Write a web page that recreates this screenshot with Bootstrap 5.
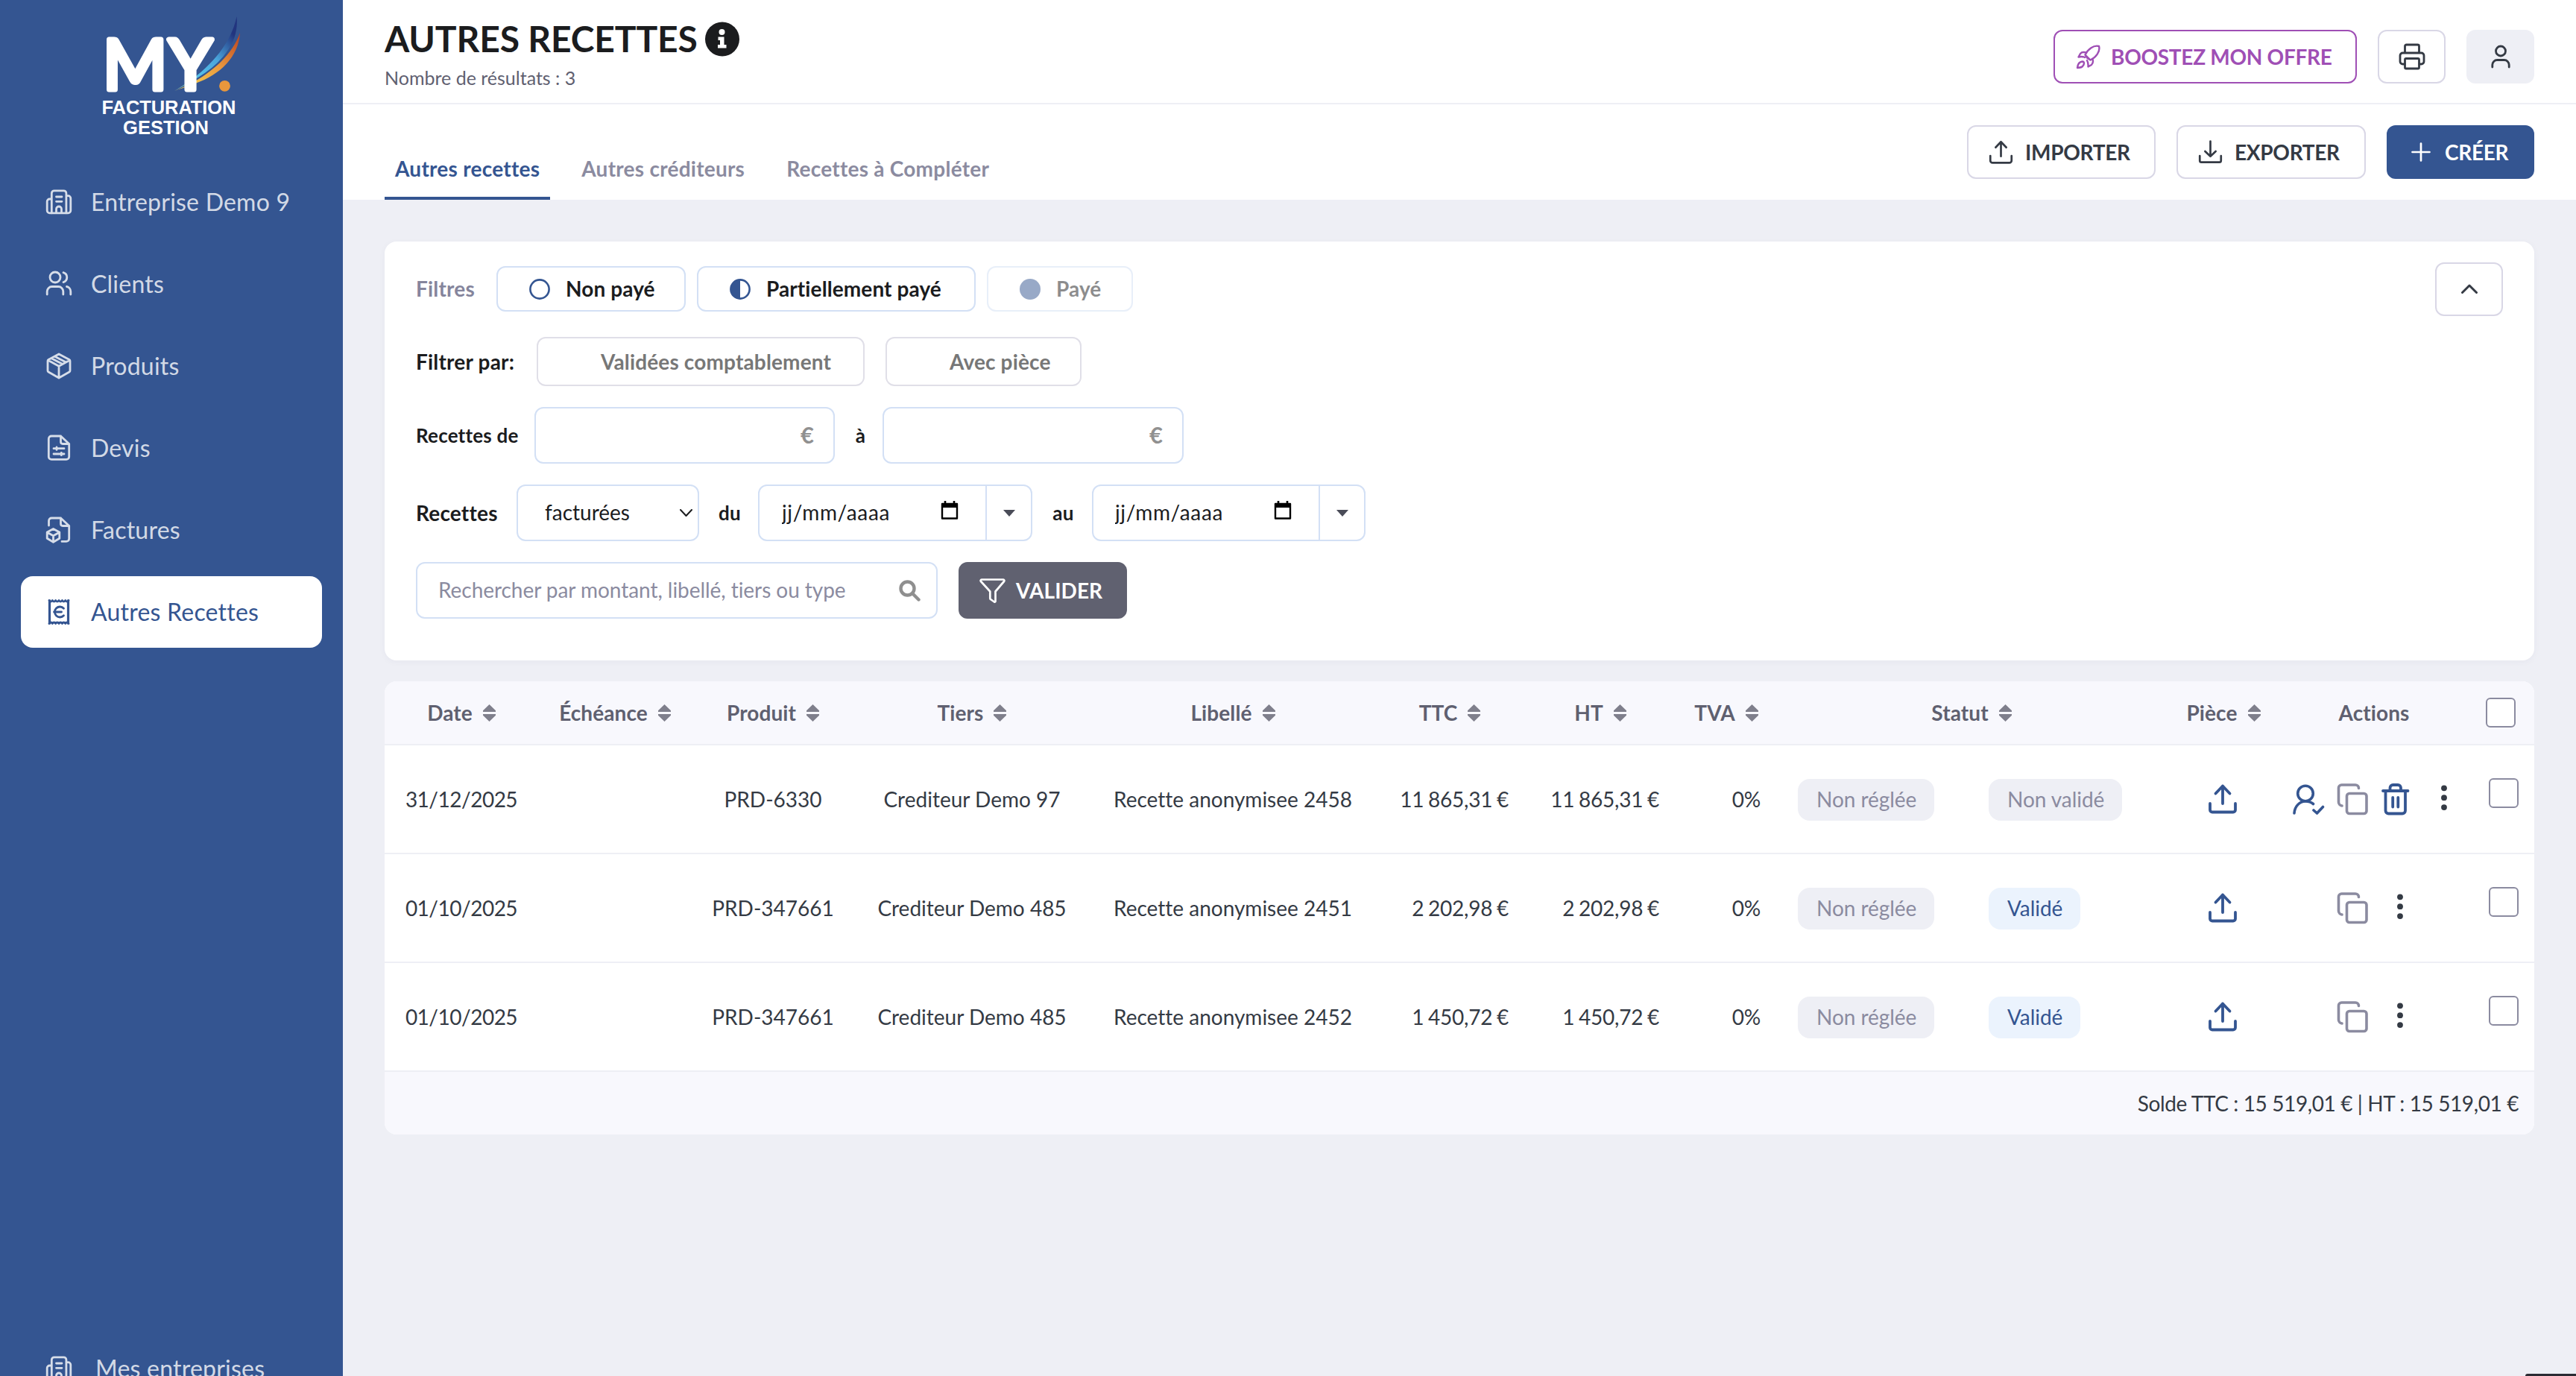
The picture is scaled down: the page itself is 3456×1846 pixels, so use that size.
<!DOCTYPE html>
<html lang="fr">
<head>
<meta charset="utf-8">
<title>Autres recettes</title>
<link rel="stylesheet" href="https://cdn.jsdelivr.net/npm/bootstrap@5.3.0/dist/css/bootstrap.min.css">
<style>
:root{--blue:#345591;--ink:#343a44;--grey:#8b8ba0;--line:#eeeff5;--edge:#d9d7e6;--soft:#d3e0f5}
body{font-family:Lato,"Noto Sans",sans-serif;font-size:28px;line-height:1.2;font-variant-ligatures:none;background:#eeeff5;color:var(--ink);height:1846px;overflow:hidden}
svg{display:block;flex:none;fill:none;stroke-linecap:round;stroke-linejoin:round}
.side{width:460px;height:1846px;background:var(--blue);overflow:hidden}
.brand{height:223px}
.side-link{height:96px;margin:0 28px 14px;padding:0 32px;border-radius:16px;font-size:32px;letter-spacing:.22px;color:rgba(255,255,255,.8);text-decoration:none;display:flex;align-items:center;flex:none}
.side-link svg{width:36px;height:36px;margin-right:25px;margin-left:1px;stroke:currentColor;stroke-width:2.8}
.side-link.on{background:#fff;color:var(--blue)}
.side-end{margin-top:905px}
.side-end svg{margin-right:31px}
.top{height:140px;padding:28px 56px 0;border-bottom:2px solid var(--line);background:#fff}
.top h1{font-size:48px;line-height:48px;font-weight:700;color:#1b1c1e;letter-spacing:-.15px;margin:0 0 13px}
.top .count{font-size:25px;line-height:30px;color:#606070}
.tools{gap:28px;padding-top:12px}
.bt{height:72px;border:2px solid var(--edge);border-radius:12px;background:#fff;color:var(--ink);font-size:28px;font-weight:700;line-height:1;letter-spacing:-.3px;display:flex;align-items:center;padding:0}
.bt svg{stroke:currentColor}
.bt-sq{width:91px;justify-content:center}
.bt-boost{width:407px;border-color:#9f4fb5;color:#9f4fb5;padding-left:28px}
.sub{height:128px;padding:0 56px;background:#fff}
.tabs{gap:28px}
.tabs .tab-item{height:128px;padding:60px 14px 0;line-height:52px;border-bottom:4px solid transparent;font-weight:700;letter-spacing:.25px;color:var(--grey);text-decoration:none}
.tabs .tab-item.on{color:var(--blue);border-color:var(--blue)}
.acts{gap:28px;padding-top:28px}
.panel{margin:56px 56px 28px;height:562px;border-radius:16px;background:#fff;padding:33px 42px 0;box-shadow:0 2px 10px rgba(60,60,110,.04)}
.lbl{font-weight:700;color:#1b1c1e;white-space:nowrap;letter-spacing:.2px;padding-top:1px}
.chip{height:61px;border:2px solid var(--soft);border-radius:12px;font-weight:700;color:#1b1c1e;display:flex;align-items:center;padding-left:42px;margin-right:15px;letter-spacing:.1px}
.chip svg{margin-right:21px}
.tog{height:66px;border:2px solid #e0dfe8;border-radius:12px;font-weight:700;color:#777;display:flex;align-items:center;letter-spacing:.15px;padding-top:1px}
.fld{height:76px;border:2px solid var(--soft);border-radius:12px;background:#fff;display:flex;align-items:center;color:#1b1c1e}
.fld input{border:0;outline:0;background:none;width:100%;padding:0;color:inherit;min-width:0}
.fld input::placeholder{color:var(--grey);opacity:1;letter-spacing:-.05px}
.fld .dt::placeholder{color:#1b1c1e;letter-spacing:.65px}
.dd{width:61px;height:72px;border-left:2px solid var(--soft);display:flex;align-items:center;justify-content:center}
.list{margin:0 56px;border-radius:16px;overflow:hidden;background:#fff}
.list table{width:2884px;table-layout:fixed;border-collapse:separate;border-spacing:0;margin:0}
.list th{height:86px;padding:2px 0 0;background:#f8f8fd;border-bottom:2px solid var(--line);color:#5f6070;font-weight:700;text-align:center;vertical-align:middle;letter-spacing:.1px}
.list th svg{display:inline-block;vertical-align:-1px;margin-left:14px;fill:#7f7f8c}
.list td{height:146px;padding:1px 0 0;border-bottom:2px solid var(--line);text-align:center;vertical-align:middle;white-space:nowrap}
.list td.num{text-align:right;letter-spacing:-.2px;word-spacing:-1.3px;padding-right:20px}
.list td.num.n2{padding-right:24px}
.list td svg{position:relative;top:-1px;left:-1px}
.date{letter-spacing:-.5px}
.state{height:56px;border-radius:16px;background:#eeeff5;color:var(--grey);display:inline-flex;align-items:center;padding:1px 24px 0 25px;font-size:28px;letter-spacing:-.05px}
.state.ok{background:#ebf3fd;color:var(--blue)}
.slot{width:256px;text-align:left}
.box{display:block;width:40px;height:40px;border:2px solid var(--grey);border-radius:6px!important;margin:0!important;float:none!important}
.list td.pick{vertical-align:top;padding:44px 0 0 27px}
.list th.pick{padding:0 0 0 23px}
.foot{height:84px;background:#f8f8fd;padding:2px 21px 0 0;letter-spacing:-.39px;display:flex;align-items:center;justify-content:flex-end}
.strip{position:fixed;right:0;bottom:0;width:68px;height:3px;background:#2b2b33;border-top-left-radius:3px}
</style>
<script src="https://cdn.jsdelivr.net/npm/bootstrap@5.3.0/dist/js/bootstrap.bundle.min.js"></script>
</head>
<body>
<svg width="0" height="0" class="position-absolute">
  <defs>
    <symbol id="i-build" viewBox="0 0 36 36"><path d="M8.3 33V6.200a3.400 3.400 0 0 1 3.400-3.400h12.800a3.400 3.400 0 0 1 3.400 3.400V33M8.300 14H5.500a3.300 3.300 0 0 0-3.300 3.300v12.200A3.300 3.300 0 0 0 5.500 32.800h25a3.300 3.300 0 0 0 3.300-3.300V13a3.300 3.300 0 0 0-3.300-3.300h-2.600M14.500 11h7.500M14.500 17.300h7.500M14.500 32.500v-5a3.500 3.500 0 0 1 7 0v5"/></symbol>
    <symbol id="i-sort" viewBox="0 0 17 23"><path stroke="none" d="M8.500 0L17 8.200v1.800H0V8.200zM8.500 23L17 14.800V13H0v1.800z"/></symbol>
    <symbol id="i-up" viewBox="0 0 44 44"><path d="M5 28v8.500a3 3 0 0 0 3 3h28a3 3 0 0 0 3-3V28M22 28V4.500M12.500 14.500L22 4.500l9.500 10"/></symbol>
    <symbol id="i-down" viewBox="0 0 44 44"><path d="M3 28v8.500a3 3 0 0 0 3 3h32a3 3 0 0 0 3-3V28M22 29V2M12.500 20L22 29l9.500-9"/></symbol>
    <symbol id="i-copy" viewBox="0 0 44 44"><path d="M8 31a5 5 0 0 1-4.500-5V7a4 4 0 0 1 4-4H26a4.500 4.500 0 0 1 4.500 4.500"/><rect x="14.500" y="14.500" width="26.500" height="27" rx="3.500"/></symbol>
    <symbol id="i-dots" viewBox="0 0 20 44"><g fill="#343a44" stroke="none"><circle cx="10" cy="7.300" r="3.900"/><circle cx="10" cy="20.200" r="3.900"/><circle cx="10" cy="33.100" r="3.900"/></g></symbol>
    <symbol id="i-cal" viewBox="0 0 24 26"><path d="M2 5h20v19.500H2z" stroke="#000" stroke-width="2.400" stroke-linejoin="round"/><path d="M1 4h22v6H1z" fill="#000"/><path d="M6 1v4M18 1v4" stroke="#000" stroke-width="2.600" stroke-linecap="butt"/></symbol>
    <symbol id="i-caret" viewBox="0 0 16 9"><path d="M0 0h16L8 9z" fill="#4a4c58" stroke="none"/></symbol>
  </defs>
</svg>
<div class="d-flex">
<aside class="side d-flex flex-column flex-shrink-0">
  <div class="brand flex-shrink-0">
    <svg width="460" height="200" viewBox="0 0 460 200">
      <defs>
        <linearGradient id="gb" x1="0" y1="1" x2="1" y2="0"><stop offset=".1" stop-color="#7fc0b0"/><stop offset=".3" stop-color="#55bfe8"/><stop offset=".55" stop-color="#4aa5dc"/><stop offset=".85" stop-color="#22357f"/></linearGradient>
        <linearGradient id="go" x1="0" y1="1" x2="1" y2="0"><stop offset=".2" stop-color="#f3c44b"/><stop offset=".55" stop-color="#e9993f"/><stop offset="1" stop-color="#b8401f"/></linearGradient>
      </defs>
      <path fill="url(#gb)" d="M234 122C272 100 309 65 317.500 22C321 52 303 84 262 107C250 113 242 118 234 122z"/>
      <path fill="none" stroke="#345591" stroke-width="2" d="M250 114C285 96 306 76 318 48"/>
      <path fill="url(#go)" d="M234 122C275 106 310 78 322 44C320 76 296 100 262 112C252 116 243 119 234 122z"/>
      <g fill="#fff" stroke="#fff" stroke-width="7" font-family="Lato" font-size="93">
        <text y="120"><tspan x="138">M</tspan><tspan x="226.500">Y</tspan></text>
      </g>
      <circle cx="301.500" cy="115.300" r="7.400" fill="#e8973c"/>
      <g fill="#fff" font-family="Liberation Sans" font-weight="700" font-size="25.500">
        <text x="136.500" y="153" textLength="180">FACTURATION</text><text x="165" y="180.300" textLength="115">GESTION</text>
      </g>
    </svg>
  </div>
  <a class="side-link"><svg><use href="#i-build"/></svg>Entreprise Demo 9</a>
  <a class="side-link"><svg viewBox="0 0 36 36"><circle cx="13" cy="9" r="7"/><path d="M2.200 32v-4A6.500 6.500 0 0 1 8.700 21.500h8.600a6.500 6.500 0 0 1 6.500 6.500v4M24 2.600a6.800 6.800 0 0 1 0 13M28.500 21.500a6.500 6.500 0 0 1 5.300 6.500v4"/></svg>Clients</a>
  <a class="side-link"><svg viewBox="0 0 36 36"><path d="M18 2L32 9.500a2 2 0 0 1 1 1.800v12.900a2 2 0 0 1-1 1.800L18 34L4 26a2 2 0 0 1-1-1.800V11.300a2 2 0 0 1 1-1.800zM3.500 10.200L18 18.200L32.500 10.200M18 18.200V34M8.500 8l14.500 7.500M13 5.500L27.500 13"/></svg>Produits</a>
  <a class="side-link"><svg viewBox="0 0 36 36"><path d="M20.500 2H8a3.700 3.700 0 0 0-3.700 3.700v24A3.700 3.700 0 0 0 8 33.400h20a3.700 3.700 0 0 0 3.700-3.700V12.500zM20.500 2v7.800a2.700 2.700 0 0 0 2.700 2.700h8.500M11 18.700h14M11 26h14M15 17v3.400M21.300 24.300v3.400"/></svg>Devis</a>
  <a class="side-link"><svg viewBox="0 0 36 36"><path d="M4.500 12V5.700A3.700 3.700 0 0 1 8.200 2h12.300L31.700 12.500v17.200a3.700 3.700 0 0 1-3.700 3.700h-6M20.500 2v7.800a2.700 2.700 0 0 0 2.700 2.700h8.500M10.500 16.500l8.300 4.500v8.300l-8.300 5l-8.300-5V21zM2.800 21.500l7.700 4.200l7.700-4.200M10.500 25.700V34"/></svg>Factures</a>
  <a class="side-link on"><svg viewBox="0 0 36 36"><path stroke-linecap="butt" stroke-linejoin="miter" stroke-width="3.200" d="M5.500 1.500V34.500M30.500 1.500V34.500"/><path d="M5 2.500q2.200 3 4.300 0q2.200 3 4.300 0q2.200 3 4.400 0q2.200 3 4.400 0q2.200 3 4.300 0q2.200 3 4.300 0M5 33.500q2.200-3 4.300 0q2.200-3 4.300 0q2.200-3 4.400 0q2.200-3 4.400 0q2.200-3 4.300 0q2.200-3 4.300 0"/><path d="M24.500 13.200a7 7 0 1 0 0 9.600M11.500 18h10"/></svg>Autres Recettes</a>
  <a class="side-link side-end"><svg><use href="#i-build"/></svg>Mes entreprises</a>
</aside>

<main class="flex-grow-1">
  <header class="top d-flex justify-content-between">
    <div>
      <h1 class="d-flex align-items-center">AUTRES RECETTES<svg class="ms-2" width="48" height="47" viewBox="0 0 48 47"><circle cx="25" cy="23.500" r="23" fill="#1b1c1e"/><g fill="#fff"><circle cx="24.500" cy="14" r="4"/><path d="M19.500 20.500h8v10.500h3v4.500H19v-4.500h3v-6h-2.500z"/></g></svg></h1>
      <div class="count">Nombre de résultats : 3</div>
    </div>
    <div class="tools d-flex align-items-start">
      <button class="bt bt-boost"><svg width="33" height="33" viewBox="0 0 33 33" stroke-width="2.400" style="margin-right:14px"><path d="M31 2c-7-2-15 4-18.500 11.500l7 7C27 17 33 9 31 2zM12.500 13.500l3 4.500l4 2.500M14 10.500c-4-1-6.500-.5-8 1.500l-2.500 4.500c3-.8 6-.8 8.500.5M22.500 19.500c1 3 .5 5.500-1.500 7.500l-4.500 2.500c.2-3 0-6-1.500-8.500M8.500 22.500c-4 .5-6 3.500-6.500 8.500c5 0 8.500-1.500 9-6a2.600 2.600 0 0 0-2.500-2.500z"/></svg>BOOSTEZ MON OFFRE</button>
      <button class="bt bt-sq"><svg width="36" height="36" viewBox="0 0 36 36" stroke-width="2.800"><path d="M8.500 13V4a2 2 0 0 1 2-2h15a2 2 0 0 1 2 2v9M8 28H5.500a3.500 3.500 0 0 1-3.500-3.500V16.500A3.500 3.500 0 0 1 5.500 13h25a3.500 3.500 0 0 1 3.500 3.500v8A3.500 3.500 0 0 1 30.500 28H28"/><rect x="8.500" y="20.500" width="19" height="13.500" rx="1.500"/></svg></button>
      <button class="bt bt-sq" style="background:#eeeff5;border-color:#eeeff5"><svg width="26" height="32" viewBox="0 0 26 32" stroke-width="2.800"><circle cx="13" cy="8.500" r="6.500"/><path d="M1.800 30v-3a6.500 6.500 0 0 1 6.500-6.500h9.400a6.500 6.500 0 0 1 6.500 6.500v3"/></svg></button>
    </div>
  </header>
  <div class="sub d-flex justify-content-between">
    <nav class="tabs d-flex"><a class="tab-item on">Autres recettes</a><a class="tab-item">Autres créditeurs</a><a class="tab-item">Recettes à Compléter</a></nav>
    <div class="acts d-flex align-items-start">
      <button class="bt" style="width:253px;padding-left:27px"><svg width="33" height="33" viewBox="0 0 44 44" stroke-width="3.600" class="me-3"><path d="M3 28v8.500a4 4 0 0 0 4 4h30a4 4 0 0 0 4-4V28M22 29V3M12.500 13L22 3l9.500 10"/></svg>IMPORTER</button>
      <button class="bt" style="width:254px;padding-left:27px"><svg width="33" height="33" stroke-width="3.600" class="me-3"><use href="#i-down"/></svg>EXPORTER</button>
      <button class="bt" style="width:198px;padding-left:31px;background:var(--blue);border-color:var(--blue);color:#fff"><svg width="26" height="26" viewBox="0 0 26 26" stroke-width="2.700" style="margin-right:19px"><path d="M13 1.500v23M1.500 13h23"/></svg>CRÉER</button>
    </div>
  </div>

  <section class="panel">
    <div class="d-flex align-items-center" style="height:61px;margin-bottom:34px">
      <span class="lbl" style="width:108px;color:#85859c">Filtres</span>
      <span class="chip" style="width:254px"><svg width="28" height="28"><circle cx="14" cy="14" r="12.600" stroke="#345591" stroke-width="2.600"/></svg>Non payé</span>
      <span class="chip" style="width:374px"><svg width="28" height="28"><circle cx="14" cy="14" r="12.600" stroke="#345591" stroke-width="2.600"/><path d="M14 1a13 13 0 0 0 0 26z" fill="#345591"/></svg>Partiellement payé</span>
      <span class="chip opacity-50" style="width:196px"><svg width="28" height="28"><circle cx="14" cy="14" r="14" fill="#345591"/></svg>Payé</span>
      <button class="bt bt-sq ms-auto"><svg width="22" height="13" viewBox="0 0 22 13" stroke-width="3"><path d="M1.500 11.500L11 2l9.500 9.500"/></svg></button>
    </div>
    <div class="d-flex align-items-center" style="height:66px;margin-bottom:28px">
      <span class="lbl" style="width:162px">Filtrer par:</span>
      <span class="tog" style="width:440px;padding-left:84px;margin-right:28px">Validées comptablement</span>
      <span class="tog" style="width:263px;padding-left:84px">Avec pièce</span>
    </div>
    <div class="d-flex align-items-center" style="height:76px;margin-bottom:28px">
      <span class="lbl" style="width:159px;font-size:26px">Recettes de</span>
      <div class="fld" style="width:403px;padding-right:26px"><input aria-label="Montant minimum"><b style="color:#909090;font-size:31px">€</b></div>
      <span class="lbl text-center" style="width:64px;padding-left:5px;font-size:26px">à</span>
      <div class="fld" style="width:404px;padding-right:26px"><input aria-label="Montant maximum"><b style="color:#909090;font-size:31px">€</b></div>
    </div>
    <div class="d-flex align-items-center" style="height:76px;margin-bottom:28px">
      <span class="lbl" style="width:135px">Recettes</span>
      <div class="fld" style="width:245px;padding:0 7px 0 36px"><span class="me-auto">facturées</span><svg width="17" height="10" viewBox="0 0 17 10" stroke="#1b1c1e" stroke-width="2"><path d="M1 1l7.500 8L16 1"/></svg></div>
      <span class="lbl text-center" style="width:79px;padding-left:3px;font-size:26px">du</span>
      <div class="fld" style="width:368px;padding-left:30px"><input class="dt" placeholder="jj/mm/aaaa" aria-label="Du"><svg width="24" height="26" style="margin:-8px 36px 0 0"><use href="#i-cal"/></svg><span class="dd flex-shrink-0"><svg width="16" height="9"><use href="#i-caret"/></svg></span></div>
      <span class="lbl text-center" style="width:80px;padding-left:3px;font-size:26px">au</span>
      <div class="fld" style="width:367px;padding-left:29px"><input class="dt" placeholder="jj/mm/aaaa" aria-label="Au"><svg width="24" height="26" style="margin:-8px 36px 0 0"><use href="#i-cal"/></svg><span class="dd flex-shrink-0"><svg width="16" height="9"><use href="#i-caret"/></svg></span></div>
    </div>
    <div class="d-flex align-items-center" style="height:76px">
      <div class="fld" style="width:700px;padding:0 21px 0 28px;margin-right:28px"><input placeholder="Rechercher par montant, libellé, tiers ou type" aria-label="Rechercher"><svg width="29" height="29" viewBox="0 0 29 29" stroke="#8f8f8f" stroke-width="4.400"><circle cx="11.500" cy="11.500" r="9"/><path d="M18.500 18.500l8 8"/></svg></div>
      <button class="bt" style="width:226px;height:76px;padding-left:26px;background:#606170;border-color:#606170;color:#fff;letter-spacing:.1px"><svg width="35" height="33" viewBox="0 0 35 33" stroke-width="2.700" style="margin-right:14px"><path d="M3 1.500h29a1.500 1.500 0 0 1 1 2.500L21.500 17.500v13a1 1 0 0 1-1.500 1l-5-3.500a1.500 1.500 0 0 1-.7-1.300v-9.200L2 4a1.500 1.500 0 0 1 1-2.500z"/></svg>VALIDER</button>
    </div>
  </section>

  <section class="list">
    <table>
      <colgroup><col style="width:206px"><col style="width:206px"><col style="width:218px"><col style="width:316px"><col style="width:384px"><col style="width:198px"><col style="width:206px"><col style="width:132px"><col style="width:526px"><col style="width:150px"><col style="width:254px"><col style="width:88px"></colgroup>
      <thead><tr>
        <th>Date<svg width="17" height="23"><use href="#i-sort"/></svg></th>
        <th>Échéance<svg width="17" height="23"><use href="#i-sort"/></svg></th>
        <th>Produit<svg width="17" height="23"><use href="#i-sort"/></svg></th>
        <th>Tiers<svg width="17" height="23"><use href="#i-sort"/></svg></th>
        <th>Libellé<svg width="17" height="23"><use href="#i-sort"/></svg></th>
        <th>TTC<svg width="17" height="23"><use href="#i-sort"/></svg></th>
        <th>HT<svg width="17" height="23"><use href="#i-sort"/></svg></th>
        <th>TVA<svg width="17" height="23"><use href="#i-sort"/></svg></th>
        <th>Statut<svg width="17" height="23"><use href="#i-sort"/></svg></th>
        <th>Pièce<svg width="17" height="23"><use href="#i-sort"/></svg></th>
        <th>Actions</th>
        <th class="pick"><input type="checkbox" class="form-check-input box"></th>
      </tr></thead>
      <tbody>
        <tr>
          <td class="date">31/12/2025</td><td></td><td>PRD-6330</td><td>Crediteur Demo 97</td><td>Recette anonymisee 2458</td>
          <td class="num">11&nbsp;865,31&nbsp;€</td><td class="num n2">11&nbsp;865,31&nbsp;€</td><td class="num">0%</td>
          <td><div class="d-flex" style="padding-left:30px"><div class="slot"><span class="state">Non réglée</span></div><span class="state">Non validé</span></div></td>
          <td><svg class="mx-auto" width="44" height="44" stroke="#345591" stroke-width="3.800"><use href="#i-up"/></svg></td>
          <td><div class="d-flex" style="padding-left:18px;gap:15px">
            <svg width="44" height="44" viewBox="0 0 44 44" stroke="#345591" stroke-width="3.600"><circle cx="18" cy="14.500" r="10.300"/><path d="M3 41c.5-9 7-16 15-16c4 0 7.500 1 10.500 3.500M29 37l4.500 4L41.500 32.500"/></svg>
            <svg width="44" height="44" stroke="#8b8ba0" stroke-width="3.600"><use href="#i-copy"/></svg>
            <svg width="44" height="44" viewBox="0 0 44 44" stroke="#345591" stroke-width="3.800"><path d="M4 11h33.500M7.500 11v26.500a4 4 0 0 0 4 4h18.500a4 4 0 0 0 4-4V11M13.500 11V7a4 4 0 0 1 4-4h6.500a4 4 0 0 1 4 4v4M17.200 20v12.500M24.300 20v12.500"/></svg>
            <svg width="20" height="44" style="margin-left:17px"><use href="#i-dots"/></svg></div></td>
          <td class="pick"><input type="checkbox" class="form-check-input box"></td>
        </tr>
        <tr>
          <td class="date">01/10/2025</td><td></td><td>PRD-347661</td><td>Crediteur Demo 485</td><td>Recette anonymisee 2451</td>
          <td class="num">2&nbsp;202,98&nbsp;€</td><td class="num n2">2&nbsp;202,98&nbsp;€</td><td class="num">0%</td>
          <td><div class="d-flex" style="padding-left:30px"><div class="slot"><span class="state">Non réglée</span></div><span class="state ok">Validé</span></div></td>
          <td><svg class="mx-auto" width="44" height="44" stroke="#345591" stroke-width="3.800"><use href="#i-up"/></svg></td>
          <td><div class="d-flex" style="padding-left:77px;gap:32px">
            <svg width="44" height="44" stroke="#8b8ba0" stroke-width="3.600"><use href="#i-copy"/></svg>
            <svg width="20" height="44"><use href="#i-dots"/></svg></div></td>
          <td class="pick"><input type="checkbox" class="form-check-input box"></td>
        </tr>
        <tr>
          <td class="date">01/10/2025</td><td></td><td>PRD-347661</td><td>Crediteur Demo 485</td><td>Recette anonymisee 2452</td>
          <td class="num">1&nbsp;450,72&nbsp;€</td><td class="num n2">1&nbsp;450,72&nbsp;€</td><td class="num">0%</td>
          <td><div class="d-flex" style="padding-left:30px"><div class="slot"><span class="state">Non réglée</span></div><span class="state ok">Validé</span></div></td>
          <td><svg class="mx-auto" width="44" height="44" stroke="#345591" stroke-width="3.800"><use href="#i-up"/></svg></td>
          <td><div class="d-flex" style="padding-left:77px;gap:32px">
            <svg width="44" height="44" stroke="#8b8ba0" stroke-width="3.600"><use href="#i-copy"/></svg>
            <svg width="20" height="44"><use href="#i-dots"/></svg></div></td>
          <td class="pick"><input type="checkbox" class="form-check-input box"></td>
        </tr>
      </tbody>
    </table>
    <div class="foot">Solde TTC : 15&nbsp;519,01&nbsp;€ | HT : 15&nbsp;519,01&nbsp;€</div>
  </section>
</main>
</div>
<div class="strip"></div>
</body>
</html>
